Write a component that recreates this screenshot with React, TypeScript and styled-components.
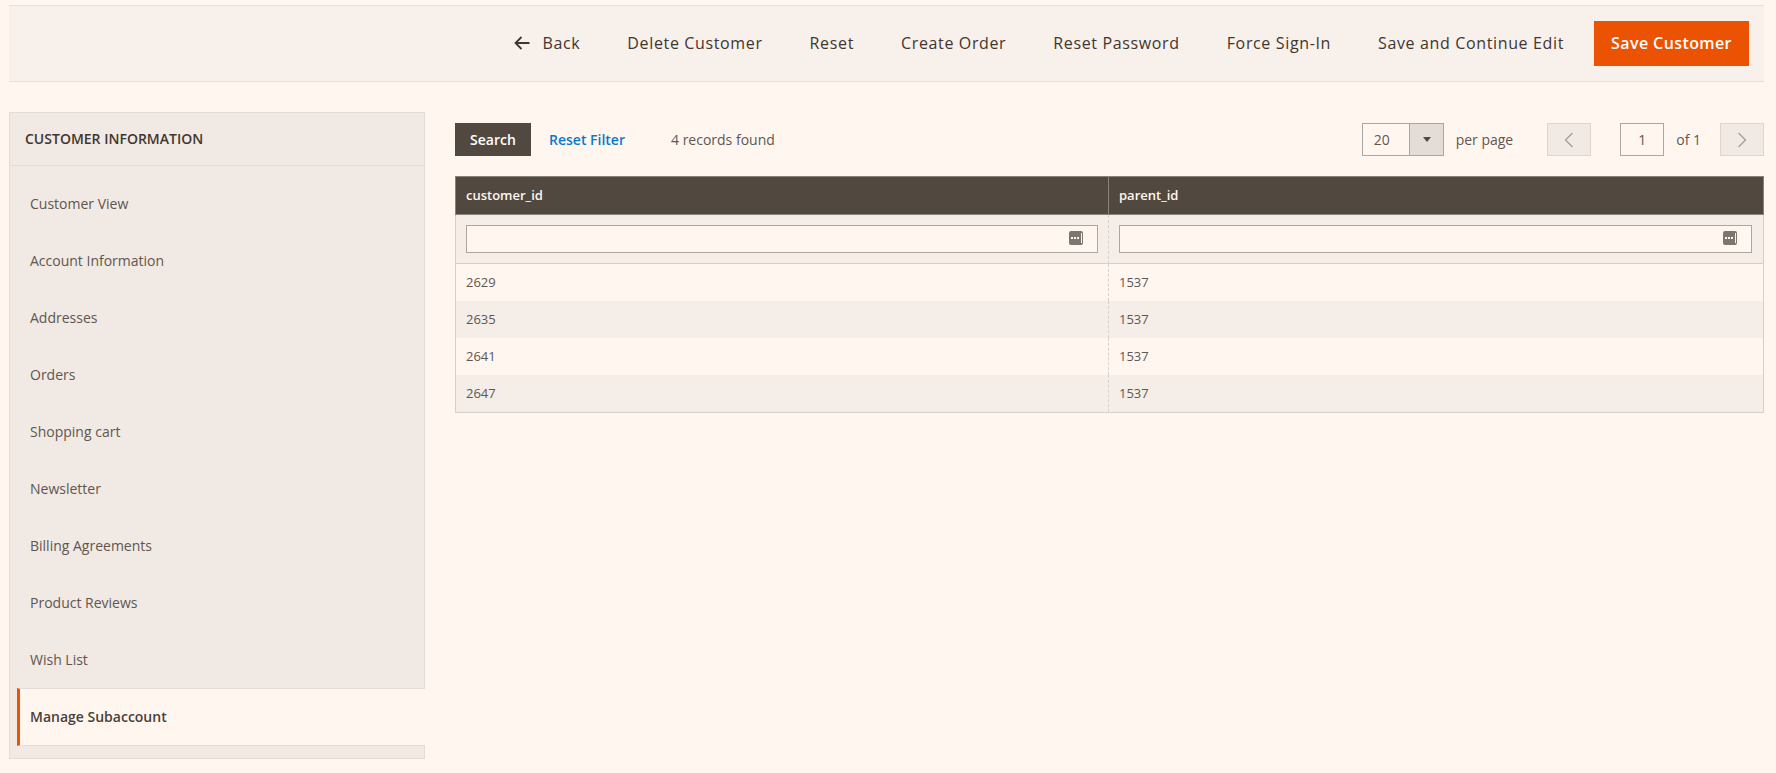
import React from "react";
import styled, { createGlobalStyle } from "styled-components";

const GlobalStyle = createGlobalStyle`
  html, body {
    margin: 0;
    padding: 0;
    background: #fff6f0;
    color: #41362f;
    font-family: "Open Sans", "Liberation Sans", sans-serif;
    font-size: 14px;
  }
`;

const menuItems = [
  "Customer View",
  "Account Information",
  "Addresses",
  "Orders",
  "Shopping cart",
  "Newsletter",
  "Billing Agreements",
  "Product Reviews",
  "Wish List",
];

const records = ["2629", "2635", "2641", "2647"];

const ArrowLeft = () => (
  <svg width="16" height="14" viewBox="0 0 16 14" fill="none" stroke="#41362f" strokeWidth="1.8">
    <path d="M1.5 7H15.5M7.5 1L1.5 7L7.5 13" />
  </svg>
);

const Chevron = ({ dir }: { dir: "left" | "right" }) => (
  <svg width="10" height="16" viewBox="0 0 10 16" fill="none" stroke="#a49d97" strokeWidth="1.3">
    <path d={dir === "left" ? "M8.5 1L1.5 8L8.5 15" : "M1.5 1L8.5 8L1.5 15"} />
  </svg>
);

const FilterIcon = () => (
  <svg width="14" height="14" viewBox="0 0 14 14">
    <rect width="14" height="14" rx="2" fill="#7b7670" />
    <rect x="2" y="6" width="2" height="2" fill="#fff6f0" />
    <rect x="5" y="6" width="2" height="2" fill="#fff6f0" />
    <rect x="8" y="6" width="2" height="2" fill="#fff6f0" />
    <rect x="12" y="2" width="1" height="10" fill="#fff6f0" />
  </svg>
);

export default function App() {
  return (
    <Page>
      <GlobalStyle />
      <ActionsBar>
        <ActionButton>
          <ArrowLeft />
          Back
        </ActionButton>
        <ActionButton>Delete Customer</ActionButton>
        <ActionButton>Reset</ActionButton>
        <ActionButton>Create Order</ActionButton>
        <ActionButton>Reset Password</ActionButton>
        <ActionButton>Force Sign-In</ActionButton>
        <ActionButton>Save and Continue Edit</ActionButton>
        <PrimaryButton>Save Customer</PrimaryButton>
      </ActionsBar>

      <Main>
        <Sidebar>
          <SidebarTitle>Customer Information</SidebarTitle>
          <Menu>
            {menuItems.map((item) => (
              <MenuItem key={item}>{item}</MenuItem>
            ))}
            <ActiveMenuItem>Manage Subaccount</ActiveMenuItem>
          </Menu>
        </Sidebar>

        <Content>
          <GridToolbar>
            <SearchButton>Search</SearchButton>
            <ResetLink>Reset Filter</ResetLink>
            <RecordCount>4 records found</RecordCount>
            <Pager>
              <PerPageSelect>
                <PerPageValue>20</PerPageValue>
                <SelectArrow />
              </PerPageSelect>
              <PerPageLabel>per page</PerPageLabel>
              <PageButton>
                <Chevron dir="left" />
              </PageButton>
              <PageInput>1</PageInput>
              <PageOf>of 1</PageOf>
              <PageButton>
                <Chevron dir="right" />
              </PageButton>
            </Pager>
          </GridToolbar>

          <Grid>
            <colgroup>
              <FirstColumn />
              <col />
            </colgroup>
            <thead>
              <tr>
                <HeadCell>customer_id</HeadCell>
                <HeadCell>parent_id</HeadCell>
              </tr>
              <tr>
                <FilterCell>
                  <FilterInput>
                    <FilterIcon />
                  </FilterInput>
                </FilterCell>
                <FilterCell>
                  <FilterInput>
                    <FilterIcon />
                  </FilterInput>
                </FilterCell>
              </tr>
            </thead>
            <tbody>
              {records.map((id, i) => (
                <BodyRow key={id} $odd={i % 2 === 1}>
                  <BodyCell>{id}</BodyCell>
                  <BodyCell>1537</BodyCell>
                </BodyRow>
              ))}
            </tbody>
          </Grid>
        </Content>
      </Main>
    </Page>
  );
}

const Page = styled.div`
  height: 773px;
  padding: 5px 12px 0 9px;
  box-sizing: border-box;
  overflow: hidden;
`;

const ActionsBar = styled.div`
  height: 77px;
  box-sizing: border-box;
  display: flex;
  align-items: center;
  justify-content: flex-end;
  padding-right: 15px;
  background: #f8f0ea;
  border-top: 1px solid #e6dfda;
  border-bottom: 1px solid #e6dfda;
`;

const ActionButton = styled.div`
  display: flex;
  align-items: center;
  gap: 13px;
  padding: 0 16px 2px;
  margin-right: 15px;
  font-size: 16px;
  letter-spacing: 0.64px;
  color: #41362f;
  white-space: nowrap;

  &:nth-last-child(2) {
    margin-right: 14px;
  }
`;

const PrimaryButton = styled.div`
  width: 155px;
  height: 45px;
  box-sizing: border-box;
  padding-bottom: 2px;
  display: flex;
  align-items: center;
  justify-content: center;
  background: #eb5202;
  color: #fff;
  font-size: 16px;
  font-weight: 600;
  letter-spacing: 0.025em;
  white-space: nowrap;
`;

const Main = styled.div`
  display: flex;
  gap: 30px;
  margin-top: 30px;
`;

const Sidebar = styled.div`
  width: 416px;
  height: 647px;
  flex-shrink: 0;
  box-sizing: border-box;
  background: #f1e9e3;
  border: 1px solid #e3dcd7;
`;

const SidebarTitle = styled.div`
  height: 53px;
  box-sizing: border-box;
  display: flex;
  align-items: center;
  padding: 0 0 2px 15px;
  border-bottom: 1px solid #e3dcd7;
  font-size: 14px;
  font-weight: 600;
  text-transform: uppercase;
  color: #41362f;
`;

const Menu = styled.div`
  padding-top: 9px;
`;

const MenuItem = styled.div`
  height: 57px;
  display: flex;
  align-items: center;
  padding-left: 20px;
  font-size: 14px;
  color: #5f5650;
`;

const ActiveMenuItem = styled.div`
  height: 58px;
  box-sizing: border-box;
  display: flex;
  align-items: center;
  margin-left: 7px;
  margin-right: -1px;
  padding: 0 0 1px 10px;
  background: #fff6f0;
  border-left: 3px solid #eb5202;
  border-top: 1px solid #e3dcd7;
  border-bottom: 1px solid #e3dcd7;
  font-size: 14px;
  font-weight: 600;
  color: #4a403a;
`;

const Content = styled.div`
  flex: 1;
  min-width: 0;
  padding-top: 11px;
`;

const GridToolbar = styled.div`
  display: flex;
  align-items: center;
  height: 33px;
  margin-bottom: 20px;
`;

const SearchButton = styled.div`
  width: 76px;
  height: 33px;
  display: flex;
  align-items: center;
  justify-content: center;
  background: #514940;
  color: #fff;
  font-size: 14px;
  font-weight: 600;
`;

const ResetLink = styled.div`
  margin-left: 18px;
  font-size: 14px;
  font-weight: 600;
  color: #0a7ac8;
`;

const RecordCount = styled.div`
  margin-left: 46px;
  font-size: 14px;
  color: #5f5650;
`;

const Pager = styled.div`
  display: flex;
  align-items: center;
  margin-left: auto;
  font-size: 14px;
  color: #5f5650;
`;

const PerPageSelect = styled.div`
  width: 82px;
  height: 33px;
  box-sizing: border-box;
  display: flex;
  border: 1px solid #ada5a0;
`;

const PerPageValue = styled.div`
  flex: 1;
  display: flex;
  align-items: center;
  padding-left: 11px;
  font-size: 14px;
  color: #5f5650;
`;

const SelectArrow = styled.div`
  width: 33px;
  position: relative;
  background: #e3dcd7;
  border-left: 1px solid #ada5a0;

  &::after {
    content: "";
    position: absolute;
    left: 13px;
    top: 13px;
    border-left: 4px solid transparent;
    border-right: 4px solid transparent;
    border-top: 5px solid #514940;
  }
`;

const PerPageLabel = styled.div`
  margin-left: 12px;
  margin-right: 34px;
`;

const PageButton = styled.div`
  width: 44px;
  height: 33px;
  box-sizing: border-box;
  display: flex;
  align-items: center;
  justify-content: center;
  background: #f1e9e3;
  border: 1px solid #dcd5d0;
`;

const PageInput = styled.div`
  width: 44px;
  height: 33px;
  box-sizing: border-box;
  display: flex;
  align-items: center;
  justify-content: center;
  margin-left: 29px;
  border: 1px solid #ada5a0;
`;

const PageOf = styled.div`
  margin-left: 12px;
  margin-right: 19px;
`;

const Grid = styled.table`
  width: 1309px;
  table-layout: fixed;
  border-collapse: separate;
  border-spacing: 0;
  border-bottom: 1px solid #d6d0cb;
`;

const FirstColumn = styled.col`
  width: 653px;
`;

const HeadCell = styled.th`
  height: 39px;
  box-sizing: border-box;
  padding: 0 10px 2px;
  text-align: left;
  background: #514940;
  border: 1px solid #8a837a;
  border-width: 1px 0 1px 1px;
  color: #fff6f0;
  font-size: 13px;
  font-weight: 600;

  &:last-child {
    border-right: 1px solid #8a837a;
  }
`;

const FilterCell = styled.td`
  height: 49px;
  box-sizing: border-box;
  padding: 0 10px;
  background: #f5eee8;
  border-left: 1px dashed #d6d0cb;
  border-bottom: 1px solid #d6d0cb;

  &:first-child {
    border-left: 1px solid #d6d0cb;
  }

  &:last-child {
    padding-right: 11px;
    border-right: 1px solid #d6d0cb;
  }
`;

const FilterInput = styled.div`
  height: 28px;
  box-sizing: border-box;
  display: flex;
  align-items: center;
  justify-content: flex-end;
  padding: 0 14px 2px 0;
  background: #fff6f0;
  border: 1px solid #ada5a0;
`;

const BodyRow = styled.tr<{ $odd: boolean }>`
  background: ${(p) => (p.$odd ? "#f5eee8" : "#fff6f0")};
`;

const BodyCell = styled.td`
  height: 37px;
  box-sizing: border-box;
  padding: 0 10px 1px;
  font-size: 13px;
  color: #5f5650;
  border-left: 1px dashed #d6d0cb;

  &:first-child {
    border-left: 1px solid #d6d0cb;
  }

  &:last-child {
    border-right: 1px solid #d6d0cb;
  }
`;
